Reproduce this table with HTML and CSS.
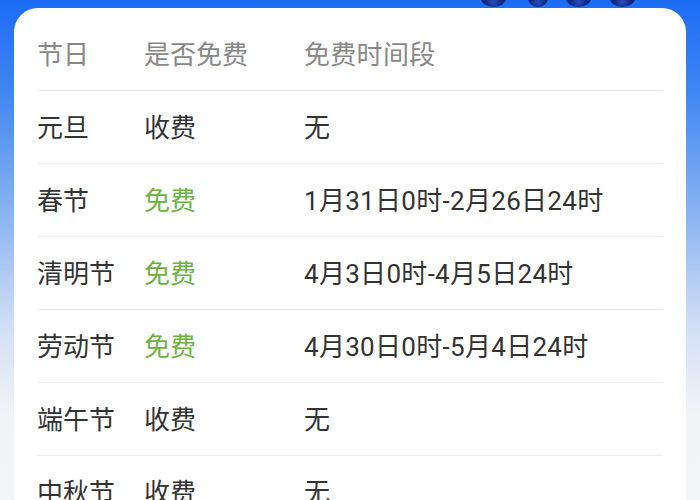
FILE: index.html
```html
<!DOCTYPE html>
<html lang="zh-CN">
<head>
  <meta charset="UTF-8" />
  <meta name="viewport" content="width=device-width, initial-scale=1.0" />
  <title>节假日高速免费时间</title>
  <link rel="stylesheet" href="styles.css">
</head>
<body>

  <div class="deco">
    <span class="dot"></span>
    <span class="dot"></span>
    <span class="dot"></span>
    <span class="dot"></span>
  </div>

  <div class="card">
    <div class="row head">
      <div class="c1">节日</div>
      <div class="c2">是否免费</div>
      <div class="c3">免费时间段</div>
    </div>
    <div class="row">
      <div class="c1">元旦</div>
      <div class="c2">收费</div>
      <div class="c3">无</div>
    </div>
    <div class="row">
      <div class="c1">春节</div>
      <div class="c2 free">免费</div>
      <div class="c3">1月31日0时-2月26日24时</div>
    </div>
    <div class="row">
      <div class="c1">清明节</div>
      <div class="c2 free">免费</div>
      <div class="c3">4月3日0时-4月5日24时</div>
    </div>
    <div class="row">
      <div class="c1">劳动节</div>
      <div class="c2 free">免费</div>
      <div class="c3">4月30日0时-5月4日24时</div>
    </div>
    <div class="row">
      <div class="c1">端午节</div>
      <div class="c2">收费</div>
      <div class="c3">无</div>
    </div>
    <div class="row">
      <div class="c1">中秋节</div>
      <div class="c2">收费</div>
      <div class="c3">无</div>
    </div>
  </div>

</body>
</html>
```

FILE: styles.css
```css
* {
  margin: 0;
  padding: 0;
  box-sizing: border-box;
}

body {
  width: 700px;
  height: 500px;
  overflow: hidden;
  padding: 8px 14px 0;
  font-family: Roboto, "Noto Sans CJK SC", sans-serif;
  background: linear-gradient(to bottom, #1c6cf4 0, #3f86f3 90px, #88b2f1 210px, #d3e0f5 330px, #f3f4f7 420px, #f4f5f7 500px);
  position: relative;
}

/* dark round things peeking in above the card */
.deco {
  position: absolute;
  top: -10px;
  left: 481px;
  display: flex;
}

.dot {
  width: 25px;
  height: 17px;
  border-radius: 50%;
  background: radial-gradient(circle at 50% 70%, #2c4fb8 0, #0d2a86 45%, #0a1f66 100%);
  margin-right: 22px;
}

.dot:nth-child(2) {
  width: 20px;
  margin-right: 18px;
}

.dot:nth-child(3) {
  margin-right: 19px;
}

.card {
  background: #ffffff;
  border-radius: 24px 24px 0 0;
  padding: 10px 23px 0;
  height: 520px;
}

.row {
  display: flex;
  align-items: center;
  height: 73px;
  padding-bottom: 4px;
  border-bottom: 1px solid #ececec;
  font-size: 26px;
  color: #333333;
  white-space: nowrap;
}

.row.head {
  color: #888888;
}

.c1 {
  width: 107px;
}

.c2 {
  width: 160px;
}

.c3 {
  flex: 1;
  letter-spacing: 0.3px;
}

.free {
  color: #6cb33e;
}
```
